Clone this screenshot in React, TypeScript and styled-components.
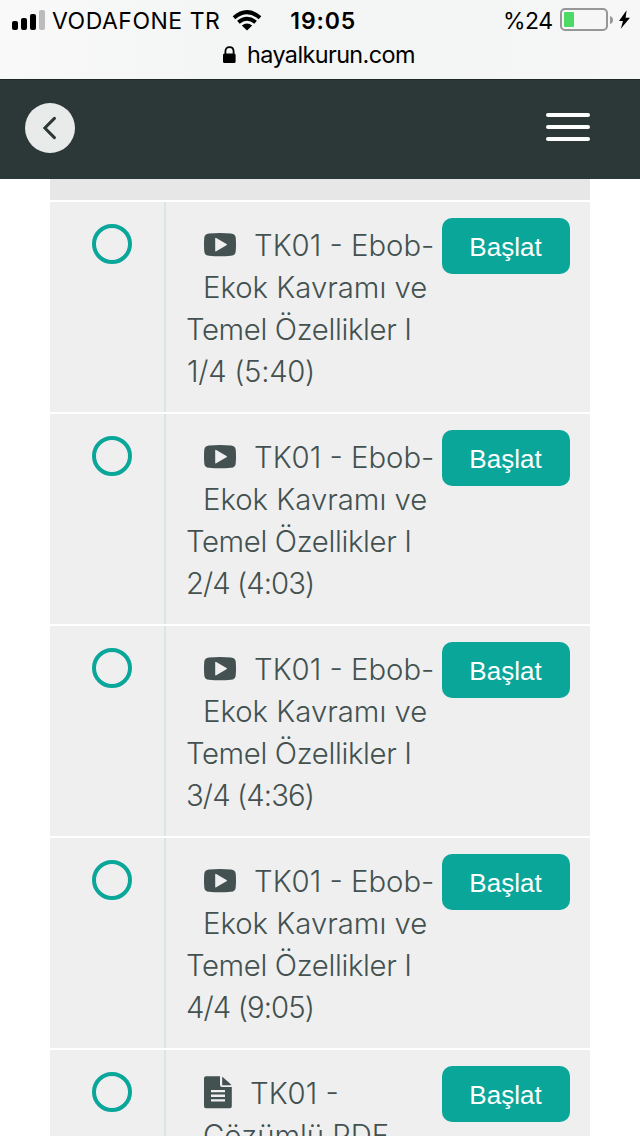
import React from "react";
import styled, { createGlobalStyle } from "styled-components";

const Global = createGlobalStyle`
  *, *::before, *::after { box-sizing: border-box; }
  html, body { margin: 0; padding: 0; background: #fff; }
  body { font-family: Inter, "Liberation Sans", sans-serif; }
`;

const Screen = styled.div`
  width: 640px;
  height: 1136px;
  overflow: hidden;
  display: flex;
  flex-direction: column;
  background: #fff;
`;

const BrowserChrome = styled.header`
  flex: none;
  height: 79px;
  background: linear-gradient(90deg, #f9f9f9 0%, #f4f5f5 35%, #f4f5f5 70%, #f7f7f7 100%);
  color: #000;
`;

const StatusBar = styled.div`
  display: flex;
  align-items: center;
  height: 40px;
  padding: 0 9px 0 12px;
`;

const StatusText = styled.span<{ $weight?: number; $spacing?: number; $left?: number }>`
  padding-top: 1px;
  font-size: 23px;
  line-height: 40px;
  font-weight: ${(p) => p.$weight ?? 400};
  letter-spacing: ${(p) => p.$spacing ?? 0}px;
  margin-left: ${(p) => p.$left ?? 0}px;
  white-space: nowrap;
`;

const Glyph = styled.svg<{ $left?: number }>`
  display: block;
  flex: none;
  margin-left: ${(p) => p.$left ?? 0}px;
`;

const Spring = styled.span`
  flex: 1;
`;

const AddressBar = styled.div`
  display: flex;
  align-items: center;
  height: 30px;
  padding-left: 223px;
`;

const Domain = styled.span`
  margin-left: 11px;
  font-size: 23.4px;
  line-height: 30px;
  letter-spacing: -0.6px;
`;

const AppBar = styled.nav`
  flex: none;
  display: flex;
  align-items: center;
  justify-content: space-between;
  height: 100px;
  padding: 0 50px 3px 25px;
  background: #2c3737;
  border-top: 1px solid #202729;
`;

const BackButton = styled.button`
  display: grid;
  place-items: center;
  width: 50px;
  height: 50px;
  padding: 0;
  border: 0;
  border-radius: 50%;
  background: #e9ebeb;
`;

const MenuButton = styled.button`
  display: flex;
  flex-direction: column;
  gap: 8px;
  width: 44px;
  padding: 0 0 2px;
  border: 0;
  background: none;
`;

const MenuLine = styled.span`
  height: 4px;
  border-radius: 2px;
  background: #fff;
`;

const Lessons = styled.main`
  flex: none;
  display: flex;
  flex-direction: column;
  gap: 2px;
  margin: 0 50px;
`;

const SectionEdge = styled.div`
  height: 21px;
  background: #e7e7e7;
`;

const LessonRow = styled.section`
  display: grid;
  grid-template-columns: 116px 276px 128px;
  height: 210px;
  background: #efefef;
`;

const StateCell = styled.div`
  display: flex;
  justify-content: center;
  align-items: flex-start;
  padding: 22px 0 0 10px;
  border-right: 2px solid #d9e8e6;
`;

const StateRing = styled.span`
  width: 40px;
  height: 40px;
  border: 4px solid #0aa699;
  border-radius: 50%;
`;

const Title = styled.div`
  padding: 23px 0 0 20px;
  color: #435150;
  font-size: 29.3px;
  font-weight: 300;
`;

const TitleLine = styled.div<{ $indent?: number; $spacing?: number }>`
  display: flex;
  align-items: center;
  height: 42px;
  line-height: 42px;
  padding-left: ${(p) => p.$indent ?? 0}px;
  letter-spacing: ${(p) => p.$spacing ?? 0}px;
  white-space: pre;
`;

const IconSlot = styled.span<{ $width: number; $top: number }>`
  flex: none;
  width: ${(p) => p.$width}px;
  height: 42px;
  padding-top: ${(p) => p.$top}px;
`;

const StartButton = styled.button`
  width: 128px;
  height: 56px;
  margin-top: 16px;
  padding: 2px 1px 0 0;
  border: 0;
  border-radius: 10px;
  background: #0aa699;
  color: #fff;
  font: 400 26px "Liberation Sans", Arial, sans-serif;
  text-align: center;
`;

const VideoIcon = () => (
  <Glyph width="32" height="32" viewBox="0 0 32 32">
    <path
      fill="#435150"
      fillRule="evenodd"
      d="M5 4.6Q16 3.6 27 4.6Q31.4 5 31.7 8.6Q32.3 15.5 31.7 22.4Q31.4 26.4 27 26.8Q16 27.8 5 26.8Q.6 26.4.3 22.4Q-.3 15.5.3 8.6Q.6 5 5 4.6ZM11.2 9.4V21.8Q11.2 22.8 12.2 22.3L22.5 16.3Q23.4 15.6 22.5 15L12.2 8.9Q11.2 8.4 11.2 9.4Z"
    />
  </Glyph>
);

const DocumentIcon = () => (
  <Glyph width="28" height="36" viewBox="0 0 28 36">
    <path
      fill="#435150"
      fillRule="evenodd"
      d="M2 1.3H16V10Q16 12 18 12H27.8V31.3Q27.8 33.3 25.8 33.3H2Q0 33.3 0 31.3V3.3Q0 1.3 2 1.3ZM7 15V17.3H21V15ZM7 19.6V21.9H21V19.6ZM7 24.2V26.5H21V24.2Z"
    />
    <path fill="#435150" d="M18.2 1.7Q18.8 2 19.2 2.4L26.5 9.1Q27 9.6 27.3 10.2H18.2Z" />
  </Glyph>
);

const Row = ({ children }: { children: React.ReactNode }) => (
  <LessonRow>
    <StateCell>
      <StateRing />
    </StateCell>
    <Title>{children}</Title>
    <StartButton>Başlat</StartButton>
  </LessonRow>
);

const videos = [
  { part: "1/4 (5:40)", indent: 1, spacing: -0.3 },
  { part: "2/4 (4:03)", indent: 0, spacing: -0.95 },
  { part: "3/4 (4:36)", indent: 0, spacing: -0.9 },
  { part: "4/4 (9:05)", indent: 0, spacing: -0.9 },
];

export default function App() {
  return (
    <Screen>
      <Global />
      <BrowserChrome>
        <StatusBar>
          <Glyph width="33" height="20" viewBox="0 0 33 20">
            <rect x="0" y="11" width="6" height="9" rx="2" />
            <rect x="9" y="8" width="6" height="12" rx="2" />
            <rect x="18" y="4" width="6" height="16" rx="2" />
            <rect x="27" y="0" width="6" height="20" rx="2" fill="#bcbcbc" />
          </Glyph>
          <StatusText $left={7} $spacing={0.5}>VODAFONE TR</StatusText>
          <Glyph $left={12} width="30" height="21" viewBox="0 0 30 21">
            <path fill="none" stroke="#000" strokeWidth="4" d="M2 7.8Q15-3.4 28 7.8M6.4 12.3Q15 5.2 23.6 12.3" />
            <path d="M15 20.5L9.8 15.4Q15 11.4 20.2 15.4Z" />
          </Glyph>
          <StatusText $left={28} $weight={600} $spacing={0.9}>19:05</StatusText>
          <Spring />
          <StatusText $spacing={-0.5}>%24</StatusText>
          <Glyph $left={7.5} width="71" height="24" viewBox="0 0 71 24">
            <rect x="1" y="1" width="46" height="21" rx="4" fill="none" stroke="#979797" strokeWidth="2" />
            <rect x="4" y="4" width="10" height="15" rx="1" fill="#4cd964" />
            <path fill="#979797" d="M50 8Q53 9 53 12T50 16Z" />
            <path d="M66.6 2.2L59 13H63L60.8 20.8L70 9.8H65.6Z" />
          </Glyph>
        </StatusBar>
        <AddressBar>
          <Glyph width="13" height="18" viewBox="0 0 13 18">
            <path fill="none" stroke="#000" strokeWidth="1.8" d="M2.4 9V5.5Q2.4 1.2 6.5 1.2T10.6 5.5V9" />
            <rect x="0" y="7.5" width="12.6" height="9.4" rx="1.5" />
          </Glyph>
          <Domain>hayalkurun.com</Domain>
        </AddressBar>
      </BrowserChrome>
      <AppBar>
        <BackButton aria-label="Geri">
          <Glyph width="14" height="24" viewBox="0 0 14 24">
            <path fill="none" stroke="#2c3737" strokeWidth="3" strokeLinecap="round" d="M11.4 2.4L1.9 12L11.4 21.6" />
          </Glyph>
        </BackButton>
        <MenuButton aria-label="Menü">
          <MenuLine />
          <MenuLine />
          <MenuLine />
        </MenuButton>
      </AppBar>
      <Lessons>
        <SectionEdge />
        {videos.map(({ part, indent, spacing }) => (
          <Row key={part}>
            <TitleLine $indent={18}>
              <IconSlot $width={50} $top={4}>
                <VideoIcon />
              </IconSlot>
              TK01 - Ebob-
            </TitleLine>
            <TitleLine $indent={17}>Ekok Kavramı ve</TitleLine>
            <TitleLine $indent={-1} $spacing={-0.35}>Temel Özellikler I</TitleLine>
            <TitleLine $indent={indent} $spacing={spacing}>{part}</TitleLine>
          </Row>
        ))}
        <Row>
          <TitleLine $indent={18}>
            <IconSlot $width={46} $top={2}>
              <DocumentIcon />
            </IconSlot>
            TK01 -
          </TitleLine>
          <TitleLine $indent={17}>Çözümlü PDF</TitleLine>
        </Row>
      </Lessons>
    </Screen>
  );
}
